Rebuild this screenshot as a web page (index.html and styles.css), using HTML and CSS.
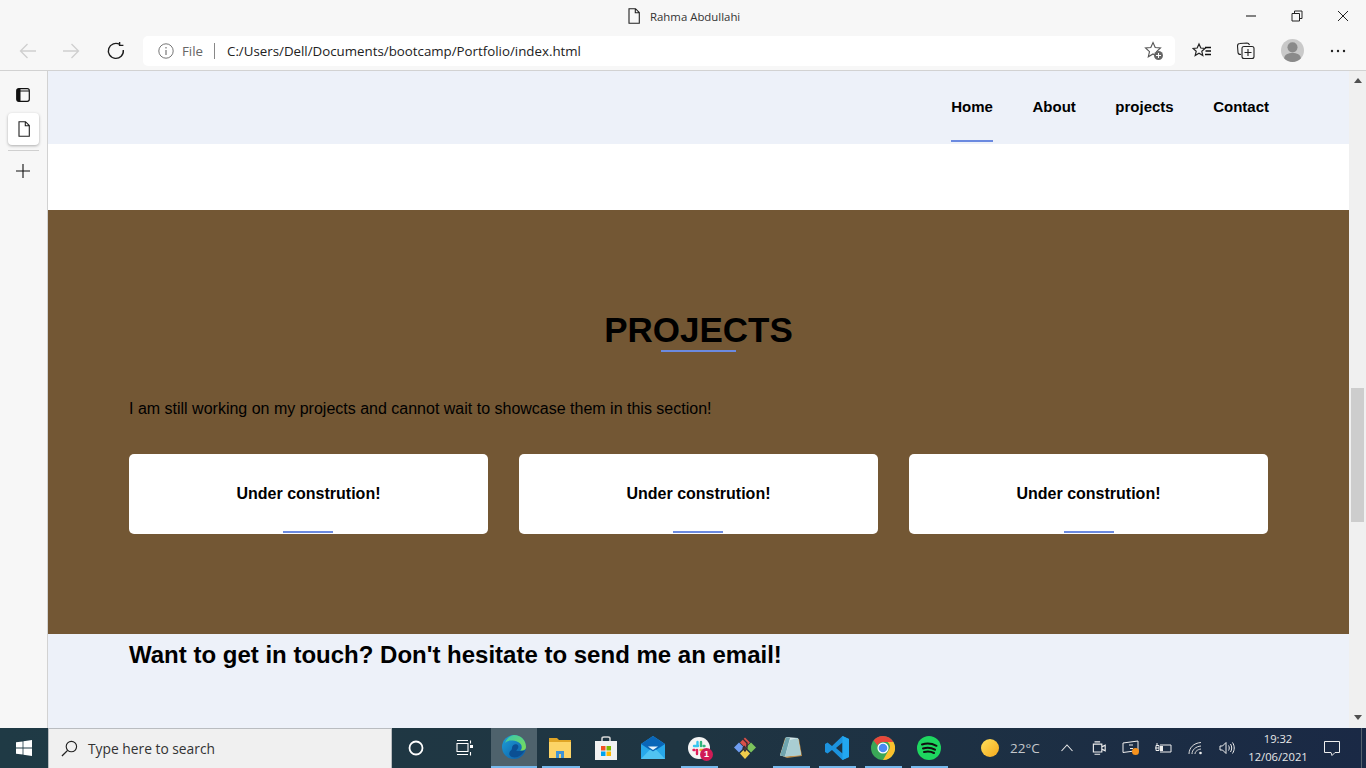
FILE: index.html
```html
<!DOCTYPE html>
<html lang="en">
<head>
<meta charset="utf-8">
<title>Rahma Abdullahi</title>
<link rel="stylesheet" href="styles.css">
</head>
<body>
<div class="screen">
  <header class="chrome">
    <div class="titlebar">
      <div class="title">
        <svg class="ic14" viewBox="0 0 14 16"><path d="M2 .7h6.5l3.8 3.8v10.800H2zM8.300 .9v3.800h3.800" fill="none" stroke="#222" stroke-width="1.100"/></svg>
        <span>Rahma Abdullahi</span>
      </div>
      <div class="winbtns">
        <div class="winbtn"><svg viewBox="0 0 12 12"><path d="M1 6h10" stroke="#222" stroke-width="1.100"/></svg></div>
        <div class="winbtn"><svg viewBox="0 0 12 12"><path d="M1 3.500h7.500V11H1zM3.500 3.300V1H11v7.500H8.700" fill="none" stroke="#222" stroke-width="1"/></svg></div>
        <div class="winbtn"><svg viewBox="0 0 12 12"><path d="M1 1l10 10M11 1L1 11" stroke="#222" stroke-width="1"/></svg></div>
      </div>
    </div>
    <div class="toolbar">
      <div class="navbtns">
        <svg class="nb" viewBox="0 0 20 20"><path d="M18 10H2.500M9.500 3l-7 7 7 7" fill="none" stroke="#cfcfcf" stroke-width="1.300"/></svg>
        <svg class="nb" viewBox="0 0 20 20"><path d="M2 10h15.500M10.500 3l7 7-7 7" fill="none" stroke="#cfcfcf" stroke-width="1.300"/></svg>
        <svg class="nb" viewBox="0 0 20 20"><path d="M13.800 3.500A7.500 7.500 0 1 0 17.300 9M13.600 1v3.400h3.800" fill="none" stroke="#1c1c1c" stroke-width="1.400"/></svg>
      </div>
      <div class="address">
        <svg class="info" viewBox="0 0 16 16"><circle cx="8" cy="8" r="7.200" fill="none" stroke="#777" stroke-width="1"/><path d="M8 7v5M8 4v1.400" stroke="#777" stroke-width="1.200"/></svg>
        <span class="file">File</span>
        <span class="sep"></span>
        <span class="url">C:/Users/Dell/Documents/bootcamp/Portfolio/index.html</span>
        <svg class="staradd" viewBox="0 0 20 20"><path d="M9 1.500l2.200 5 5.300.5-4 3.600 1.200 5.200L9 13l-4.700 2.800 1.200-5.200-4-3.600 5.300-.5z" fill="none" stroke="#555" stroke-width="1.100"/><circle cx="14.500" cy="14.500" r="4.500" fill="#666"/><path d="M14.500 12v5M12 14.500h5" stroke="#fff" stroke-width="1"/></svg>
      </div>
      <div class="tools">
        <svg class="tool" viewBox="0 0 20 20"><path d="M7 3l1.800 4 4.200.4-3.200 2.900 1 4.200L7 12.300l-3.800 2.200 1-4.200L1 7.400l4.200-.4z" fill="none" stroke="#222" stroke-width="1.200"/><path d="M13 6.500H19M13.500 10H19M13 13.500H19" stroke="#111" stroke-width="1.500"/></svg>
        <svg class="tool" viewBox="0 0 20 20"><path d="M5 13.500c-2 0-3-.5-3-2L1.500 5c0-1.500 1-2.500 2.500-2.500L11 2c1.200 0 2 .6 2.500 2" fill="none" stroke="#222" stroke-width="1.100"/><rect x="6" y="5.500" width="12" height="12" rx="2" fill="#f7f7f7" stroke="#222" stroke-width="1.100"/><path d="M12 8v7M8.500 11.500h7" stroke="#222" stroke-width="1.100"/></svg>
        <div class="avatar"><svg viewBox="0 0 22 22"><circle cx="11" cy="8" r="4.800" fill="#8a8a8a"/><path d="M3 19c0-4 4-5.500 8-5.500s8 1.500 8 5.500c-2 2-5 3-8 3s-6-1-8-3z" fill="#8a8a8a"/></svg></div>
        <svg class="tool dots" viewBox="0 0 20 20"><circle cx="4" cy="10" r="1.200" fill="#222"/><circle cx="10" cy="10" r="1.200" fill="#222"/><circle cx="16" cy="10" r="1.200" fill="#222"/></svg>
      </div>
    </div>
  </header>

  <div class="body">
    <aside class="sidebar">
      <div class="side-top">
        <svg class="side-ic" viewBox="0 0 14 14"><rect x=".7" y=".7" width="12.600" height="12.600" rx="2" fill="none" stroke="#111" stroke-width="1.200"/><path d="M1 1h3.500v12H1z" fill="#111"/><path d="M1 3h12" stroke="#111" stroke-width="1"/></svg>
      </div>
      <div class="side-card">
        <svg class="side-doc" viewBox="0 0 14 16"><path d="M2 .7h6.500l3.800 3.800v10.800H2zM8.300 .9v3.800h3.800" fill="none" stroke="#222" stroke-width="1.100"/></svg>
      </div>
      <div class="side-add">
        <svg class="side-plus" viewBox="0 0 16 16"><path d="M8 1v14M1 8h14" stroke="#111" stroke-width="1.100"/></svg>
      </div>
    </aside>

    <main class="page">
      <nav class="sitenav">
        <a class="navlink active">Home</a>
        <a class="navlink">About</a>
        <a class="navlink">projects</a>
        <a class="navlink">Contact</a>
      </nav>
      <div class="spacer"></div>
      <section class="projects">
        <h2 class="projects-title">PROJECTS</h2>
        <p class="projects-text">I am still working on my projects and cannot wait to showcase them in this section!</p>
        <div class="cards">
          <div class="card"><h3>Under constrution!</h3></div>
          <div class="card"><h3>Under constrution!</h3></div>
          <div class="card"><h3>Under constrution!</h3></div>
        </div>
      </section>
      <section class="contact">
        <h2>Want to get in touch? Don't hesitate to send me an email!</h2>
      </section>
    </main>

    <div class="scrollbar">
      <span class="arrow up"></span>
      <span class="thumb"></span>
      <span class="arrow down"></span>
    </div>
  </div>

  <footer class="taskbar">
    <div class="start"><svg viewBox="0 0 16 16"><path d="M0 2.300L6.600 1.400V7.600H0zM7.400 1.300L16 0V7.600H7.400zM0 8.400H6.600V14.600L0 13.700zM7.400 8.400H16V16L7.400 14.700z" fill="#fff"/></svg></div>
    <div class="search">
      <svg viewBox="0 0 18 18"><circle cx="11" cy="7" r="5.500" fill="none" stroke="#222" stroke-width="1.200"/><path d="M7 11l-6 6" stroke="#222" stroke-width="1.400"/></svg>
      <span>Type here to search</span>
    </div>
    <div class="tb-cortana"><svg viewBox="0 0 16 16"><circle cx="8" cy="8" r="6.500" fill="none" stroke="#fff" stroke-width="1.800"/></svg></div>
    <div class="tb-view"><svg viewBox="0 0 18 16"><path d="M1 .5h11M1 3.500h11v8H1zM1 14.500h11M14.500 .5v3M14.500 12v3.500" fill="none" stroke="#fff" stroke-width="1.100"/><rect x="14" y="5" width="3" height="3" fill="#fff"/></svg></div>

    <div class="app active">
      <svg viewBox="0 0 24 24"><defs><linearGradient id="eg" x1="0" y1="0" x2="1" y2="1"><stop offset="0" stop-color="#1ea0d8"/><stop offset="1" stop-color="#0c59a4"/></linearGradient><linearGradient id="eg2" x1="0" y1="0" x2="1" y2="1"><stop offset="0" stop-color="#36c9b0"/><stop offset="1" stop-color="#7fdc52"/></linearGradient></defs><circle cx="12" cy="12" r="12" fill="url(#eg)"/><path d="M3 8C5 2 10 0 12 0c7 0 12 5 12 12 0 3-3 4-6 3.500 3-2 2-7-2-8.500C11 5 5 5 3 8z" fill="url(#eg2)"/><path d="M10 13c0-3 3-4.500 5-3.500 2 1 2 4-1 6 3 1 6 .5 8.500 0-2 4-6 7-10 7-4 0-6-3-5-5 .5-2 2.500-2 2.500-4.500z" fill="#0b4f93"/></svg>
    </div>
    <div class="app ind first">
      <svg viewBox="0 0 24 22"><path d="M1 1h8l2 2h12v3H1z" fill="#e0a526"/><path d="M1 5h22v16H1z" fill="#fcd467"/><path d="M8 21v-7h8v7h-3v-4h-2v4z" fill="#3f94d6"/></svg>
    </div>
    <div class="app">
      <svg viewBox="0 0 24 24"><path d="M8 6V2.500C8 1.500 9 1 10 1h4c1 0 2 .5 2 1.500V6" fill="none" stroke="#d8d8d8" stroke-width="1.500"/><path d="M1 5h22v19H1z" fill="#f2f2f2"/><rect x="7" y="10" width="4.500" height="4.500" fill="#f25022"/><rect x="12.500" y="10" width="4.500" height="4.500" fill="#7fba00"/><rect x="7" y="15.500" width="4.500" height="4.500" fill="#00a4ef"/><rect x="12.500" y="15.500" width="4.500" height="4.500" fill="#ffb900"/></svg>
    </div>
    <div class="app shift">
      <svg viewBox="0 0 24 24"><path d="M0 8L12 0l12 8v15H0z" fill="#28a8ea"/><path d="M0 8l12 8 12-8L12 0z" fill="#0a66b8"/><path d="M7 10.500h10l-5 3.500z" fill="#e8f4fb"/><path d="M0 23l9-9.500 3 2 3-2 9 9.500z" fill="#50c3f2"/></svg>
    </div>
    <div class="app ind shift slack">
      <svg viewBox="0 0 22 22"><circle cx="11" cy="11" r="11" fill="#f4f4f4"/><path d="M6 9h4" stroke="#36c5f0" stroke-width="2.400" stroke-linecap="round"/><path d="M9.500 5v3" stroke="#36c5f0" stroke-width="2.400" stroke-linecap="round"/><path d="M13 5v4" stroke="#2eb67d" stroke-width="2.400" stroke-linecap="round"/><path d="M16.500 9h-1" stroke="#2eb67d" stroke-width="2.400" stroke-linecap="round"/><path d="M9 13v4M5.500 13h1" stroke="#e01e5a" stroke-width="2.400" stroke-linecap="round"/><path d="M12.500 13h3" stroke="#ecb22e" stroke-width="2.400" stroke-linecap="round"/></svg>
      <span class="badge">1</span>
    </div>
    <div class="app shift">
      <svg viewBox="0 0 24 24"><path d="M12 1l5 5-5 5-5-5z" fill="#d9504a" transform="translate(0 .5)"/><path d="M6 6.500l5 5-5 5-5-5z" fill="#6f9df0"/><path d="M18 6.500l5 5-5 5-5-5z" fill="#7cc35c"/><path d="M12 12.500l5 5-5 5.500-5-5.500z" fill="#f0cd4c"/><path d="M10 3l4 4v5l-2 3-2-3 2-2" fill="none" stroke="#3a2a30" stroke-width="1.400"/></svg>
    </div>
    <div class="app ind shift">
      <svg viewBox="0 0 24 24"><path d="M6 2l14 1 3 17-15 2-7-3z" fill="#b98b4a"/><path d="M7 1l12 1 3 17-16 1.500-5-1z" fill="#d5e8ea"/><path d="M1 19.500L7 1l4 1-5 18.500z" fill="#6fa4ad"/><path d="M6 20.500L11 4l8-2 3 17z" fill="#a9cdd2"/></svg>
    </div>
    <div class="app ind shift">
      <svg viewBox="0 0 24 24"><path d="M17.500 0L24 3v18l-6.500 3L7 14l-4.500 3.500L0 16V8l2.500-1.500L7 10zM17.500 6.500L11 12l6.500 5.500z" fill="#1c93de"/><path d="M17.500 0L24 3v18l-6.500 3z" fill="#22a7f0"/></svg>
    </div>
    <div class="app ind shift">
      <svg viewBox="0 0 24 24"><circle cx="12" cy="12" r="12" fill="#3aa757"/><path d="M12 0a12 12 0 0 1 10.400 6H12a6 6 0 0 0-5.500 3.600L2.600 4.400A12 12 0 0 1 12 0z" fill="#e8473b"/><path d="M22.400 6A12 12 0 0 1 12 24l5.200-9a6 6 0 0 0-.6-9z" fill="#fbc02d"/><circle cx="12" cy="12" r="5.600" fill="#fff"/><circle cx="12" cy="12" r="4.300" fill="#4a8af4"/></svg>
    </div>
    <div class="app ind shift">
      <svg viewBox="0 0 24 24"><circle cx="12" cy="12" r="12" fill="#1ed760"/><path d="M5 8.500c5-1.500 10-1 14.500 1.300M6 12.500c4-1.200 8.500-.8 12 1.200M7 16c3.500-.9 7-.6 10 1" fill="none" stroke="#101010" stroke-width="2" stroke-linecap="round"/></svg>
    </div>

    <div class="tray">
      <div class="sun"></div>
      <span class="temp">22°C</span>
      <div class="tray-ic"><svg class="i12" viewBox="0 0 12 8"><path d="M.5 7l5.500-6 5.500 6" fill="none" stroke="#e8e8e8" stroke-width="1.100"/></svg></div>
      <div class="tray-ic"><svg viewBox="0 0 14 16"><path d="M2 4.500h7.500v7H2zM9.500 7l3-1.500v5l-3-1.500M3 2.500h5M3 13.500h5" fill="none" stroke="#eee" stroke-width="1"/></svg></div>
      <div class="tray-ic"><svg viewBox="0 0 18 16" class="w18"><path d="M1 3L16 1v9.500L1 12.500z" fill="none" stroke="#eee" stroke-width="1"/><path d="M7 5h4M8 8.500h3" stroke="#eee" stroke-width="1"/><circle cx="13.500" cy="11.500" r="3.500" fill="#f7931e"/></svg></div>
      <div class="tray-ic"><svg viewBox="0 0 18 12" class="w18"><path d="M6 3h11v7H6M1 6h4M2 3.500v5h3v-5zM3 1v2" fill="none" stroke="#eee" stroke-width="1"/><rect x="6" y="4" width="3" height="5" fill="#eee"/></svg></div>
      <div class="tray-ic wifi"><svg viewBox="0 0 16 14"><path d="M1 13C1 7 5.500 2 13 1.500M4 13c0-4 3.500-7.500 9-8M7 13c0-2.500 2.500-4.500 6-5" fill="none" stroke="#ddd" stroke-width="1"/><circle cx="12.500" cy="12" r="1.300" fill="#eee"/></svg></div>
      <div class="tray-ic vol"><svg viewBox="0 0 16 14"><path d="M1 5h2.500L7 1.500v11L3.500 9H1zM9.500 4.500c1 1.500 1 3.500 0 5M11.500 3c1.600 2.500 1.600 5.500 0 8M13.500 1.500c2.300 3.500 2.300 7.500 0 11" fill="none" stroke="#eee" stroke-width="1"/></svg></div>
      <div class="clock"><span>19:32</span><span>12/06/2021</span></div>
      <div class="tray-ic notif"><svg viewBox="0 0 16 15"><path d="M.5 .5h15v11h-4.500l-3 3-1-3H.5z" fill="none" stroke="#eee" stroke-width="1"/></svg></div>
      <div class="peek"></div>
    </div>
  </footer>
</div>
</body>
</html>
```
FILE: styles.css
```css
* { box-sizing: border-box; margin: 0; padding: 0; }
html, body { width: 1366px; height: 768px; overflow: hidden; }
body { font-family: "Liberation Sans", Arial, sans-serif; color: #000; background: #f7f7f7; }
svg { display: block; }

.screen { width: 1366px; height: 768px; display: flex; flex-direction: column; }

/* browser chrome */
.chrome { height: 71px; background: #f7f7f7; border-bottom: 1px solid #d2d2d2; flex: none; }
.titlebar { height: 32px; display: flex; align-items: center; position: relative; justify-content: flex-end; }
.title { position: absolute; left: 627px; top: 8px; display: flex; align-items: center; gap: 9px; font: 11.400px "Open Sans", sans-serif; color: #333; }
.ic14 { width: 14px; height: 16px; }
.winbtns { display: flex; height: 28px; align-items: center; }
.winbtn { width: 46px; display: flex; justify-content: center; }
.winbtn svg { width: 12px; height: 12px; }

.toolbar { height: 38px; display: flex; align-items: center; }
.navbtns { width: 143px; display: flex; padding-left: 18px; gap: 23px; margin-top: -1px; }
.nb { width: 20px; height: 20px; }
.navbtns .nb:last-child { margin-left: 2px; }
.address { width: 1032px; height: 30px; background: #fff; border-radius: 5px; display: flex; align-items: center; margin-top: -1px; padding: 0 11px 0 15px; font: 13.300px "Open Sans", sans-serif; }
.info { width: 16px; height: 16px; }
.file { margin-left: 8px; color: #666; width: 23px; }
.sep { width: 1px; height: 16px; background: #888; margin: 0 12px 0 9px; }
.url { color: #222; white-space: nowrap; }
.staradd { width: 20px; height: 20px; margin-left: auto; }
.tools { display: flex; align-items: center; padding-left: 17px; margin-top: -1px; }
.tool { width: 20px; height: 20px; }
.tools .tool:nth-child(2) { margin-left: 24px; }
.avatar { width: 23px; height: 23px; border-radius: 50%; background: #c9c9c9; overflow: hidden; margin-left: 25px; }
.avatar svg { width: 23px; height: 23px; }
.dots { margin-left: 24px; }

/* main area */
.body { flex: 1; display: flex; min-height: 0; }
.sidebar { width: 48px; flex: none; background: #f7f7f7; border-right: 1px solid #d2d2d2; padding: 0 8px; display: flex; flex-direction: column; }
.side-top { height: 42px; display: flex; align-items: center; justify-content: center; padding: 6px 1px 0 0; }
.side-ic { width: 14px; height: 14px; }
.side-card { width: 31px; height: 32px; background: #fff; border-radius: 4px; box-shadow: 0 1px 3px rgba(0,0,0,.3); display: flex; align-items: center; justify-content: center; }
.side-doc { width: 14px; height: 16px; }
.side-add { margin-top: 5px; border-top: 1px solid #d0d0d0; height: 40px; padding: 1px 1px 0 0; display: flex; align-items: center; justify-content: center; }
.side-plus { width: 16px; height: 16px; }

.page { flex: 1; display: flex; flex-direction: column; background: #fff; min-width: 0; }
.sitenav { height: 73px; background: #edf1f9; display: flex; justify-content: flex-end; gap: 39.500px; padding-right: 80px; flex: none; }
.navlink { font-size: 15px; font-weight: 700; padding-top: 27px; height: 71px; color: #000; }
.navlink.active { border-bottom: 2px solid #6b8ae0; }
.spacer { height: 66px; flex: none; }
.projects { height: 424px; background: #735734; padding: 0 81px; flex: none; display: flex; flex-direction: column; }
.projects-title { font-size: 35px; line-height: 40px; font-weight: 700; text-align: center; margin-top: 100px; position: relative; }
.projects-title::after { content: ""; position: absolute; left: 50%; top: 40px; width: 75px; height: 2px; margin-left: -37.500px; background: #6b8ae0; }
.projects-text { font-size: 16px; line-height: 20px; margin-top: 49px; }
.cards { display: flex; gap: 31px; margin-top: 35px; }
.card { width: 359px; height: 80px; background: #fff; border-radius: 5px; position: relative; padding-top: 30px; text-align: center; }
.card h3 { font-size: 16px; line-height: 20px; font-weight: 700; }
.card::after { content: ""; position: absolute; left: 154px; top: 77px; width: 50px; height: 2px; background: #6b8ae0; }
.card:last-child::after { left: 155px; }
.contact { flex: 1; background: #edf1f9; padding: 6px 81px 0; }
.contact h2 { font-size: 24px; line-height: 30px; font-weight: 700; }

.scrollbar { width: 17px; flex: none; background: #f0f0f0; display: flex; flex-direction: column; align-items: center; }
.arrow { width: 0; height: 0; border-left: 4px solid transparent; border-right: 4px solid transparent; }
.arrow.up { border-bottom: 5px solid #505050; margin-top: 7px; }
.arrow.down { border-top: 5px solid #505050; margin-top: 193px; }
.thumb { width: 13px; height: 134px; background: #cdcdcd; margin-top: 305px; }

/* taskbar */
.taskbar { height: 40px; flex: none; display: flex; background: linear-gradient(90deg, #1f3a45 0%, #1f3542 50%, #1a2945 100%); color: #fff; }
.start { width: 48px; display: flex; align-items: center; justify-content: center; }
.start svg { width: 16px; height: 16px; }
.search { width: 344px; background: #f0f0f0; border: 1px solid #b9bcc0; border-bottom: 0; display: flex; align-items: center; padding-left: 12px; gap: 10px; color: #333; font: 13.800px "Open Sans", sans-serif; }
.search svg { width: 17px; height: 17px; }
.tb-cortana { width: 47px; display: flex; align-items: center; justify-content: center; }
.tb-cortana svg { width: 16px; height: 16px; }
.tb-view { width: 52px; display: flex; align-items: center; justify-content: center; }
.tb-view svg { width: 18px; height: 16px; }
.app { width: 46px; display: flex; align-items: center; justify-content: center; position: relative; }
.app.shift { padding-left: 2px; }
.app svg { width: 24px; height: 24px; }
.app.active { background: #4e626c; border-bottom: 2px solid #76b9ed; }
.app.ind::after { content: ""; position: absolute; left: 6px; right: 3px; bottom: 0; height: 2px; background: #76b9ed; }
.app.ind.first::after { left: 5px; }
.slack svg { width: 22px; height: 22px; }
.badge { position: absolute; left: 25px; top: 20px; width: 13px; height: 13px; border-radius: 50%; background: #d01b56; color: #fff; font-size: 9px; line-height: 13px; text-align: center; font-weight: 700; }

.tray { margin-left: 24px; display: flex; align-items: center; flex: 1; }
.sun { width: 18px; height: 18px; margin: 0 11px 0 6px; border-radius: 50%; background: linear-gradient(135deg, #ffe15c, #f5a81c); flex: none; }
.temp { width: 41px; font: 13.500px "Open Sans", sans-serif; color: #c4c8cc; white-space: nowrap; }
.tray-ic { width: 32px; display: flex; align-items: center; justify-content: center; }
.tray-ic svg { width: 16px; height: 18px; }
.tray-ic svg.i12 { width: 12px; height: 8px; }
.tray-ic svg.w18 { width: 18px; height: 16px; }
.tray-ic.wifi { width: 34px; }
.tray-ic.vol { width: 28px; }
.clock { width: 74px; display: flex; flex-direction: column; align-items: center; font: 11.200px/18px "Open Sans", sans-serif; color: #e8e8e8; }
.tray-ic.notif { width: 34px; }
.tray-ic.notif svg { width: 16px; height: 15px; }
.peek { width: 1px; height: 40px; margin-left: 12px; background: #56626e; }
```
